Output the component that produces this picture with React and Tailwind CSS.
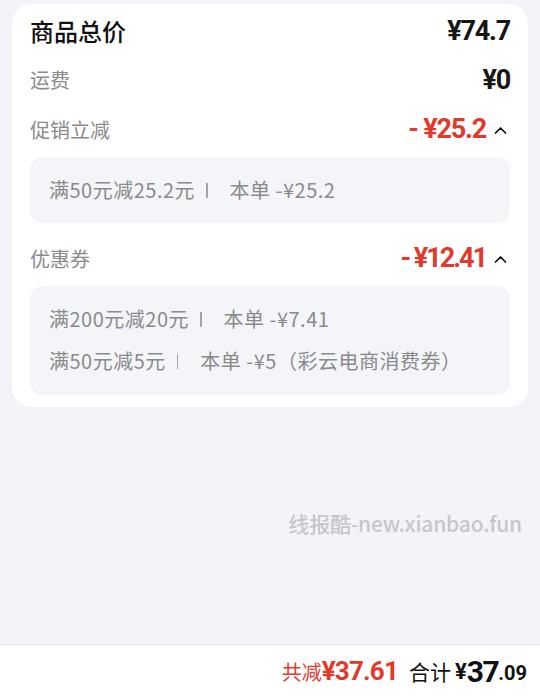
import React from 'react';

const font = { fontFamily: '"Noto Sans CJK SC", "Noto Sans", sans-serif' };
const num = { fontFamily: 'Roboto, "Noto Sans", sans-serif' };

const ChevronUp = () => (
  <svg width="13" height="8" viewBox="0 0 13 8" className="ml-[8px] mr-[3px]">
    <path d="M1.5 7 L6.5 2 L11.5 7" fill="none" stroke="#111" strokeWidth="1.7" strokeLinecap="round" strokeLinejoin="round" />
  </svg>
);

const Amount = ({ children, red, tight }) => (
  <span
    className={`text-[27px] font-bold leading-none ${tight ? 'tracking-[-2px]' : 'tracking-[-1.2px]'} ${red ? 'text-[#e13a2d]' : 'text-[#161616]'}`}
    style={num}
  >
    {children}
  </span>
);

// one line of the grey detail box: rule | amount
const DetailLine = ({ rule, amount }) => (
  <div className="h-[42px] flex items-center text-[20px] tracking-[0.5px] text-[#8a8a8a] whitespace-pre">
    <span>{rule}</span>
    <span className="ml-[11px] mr-[22px] h-[15px] w-[1.5px] bg-[#a5a5a5]" />
    <span>{amount}</span>
  </div>
);

const Detail = ({ children, last }) => (
  <div className={`rounded-[12px] bg-[#f4f5f8] px-[19px] pt-[12px] ${last ? 'pb-[13px]' : 'pb-[12px]'}`}>{children}</div>
);

export default function App() {
  return (
    <div className="h-[696px] flex flex-col bg-[#f3f4f7]" style={font}>
      <div className="flex-1 flex flex-col">
        <div className="mx-3 mt-1 rounded-[20px] bg-white px-[18px] pb-3">
          <div className="h-[54px] flex items-center justify-between">
            <span className="text-[24px] font-medium text-[#111]">商品总价</span>
            <Amount>¥74.7</Amount>
          </div>
          <div className="h-[44px] flex items-center justify-between">
            <span className="text-[20px] text-[#8a8a8a]">运费</span>
            <Amount>¥0</Amount>
          </div>
          <div className="h-[55px] flex items-center justify-between">
            <span className="text-[20px] text-[#8a8a8a]">促销立减</span>
            <div className="flex items-center">
              <Amount red>- ¥25.2</Amount>
              <ChevronUp />
            </div>
          </div>
          <Detail>
            <DetailLine rule="满50元减25.2元" amount="本单 -¥25.2" />
          </Detail>
          <div className="mt-[8px] h-[55px] flex items-center justify-between">
            <span className="text-[20px] text-[#8a8a8a]">优惠券</span>
            <div className="flex items-center">
              <Amount red tight>- ¥12.41</Amount>
              <ChevronUp />
            </div>
          </div>
          <Detail last>
            <DetailLine rule="满200元减20元" amount="本单 -¥7.41" />
            <DetailLine rule="满50元减5元" amount="本单 -¥5（彩云电商消费券）" />
          </Detail>
        </div>
        <div className="mt-[102px] pr-[18px] text-right text-[21px] font-medium leading-[28px] tracking-[-0.2px] text-[#c6c7cc]">
          线报酷-new.xianbao.fun
        </div>
      </div>
      <div className="h-[52px] border-t border-[#e6e7ea] bg-white flex items-center justify-end pr-[13px] pt-[2px]">
        <span className="text-[20px] text-[#e13a2d]">共减</span>
        <span className="text-[26px] font-bold tracking-[-0.8px] text-[#e13a2d]" style={num}>¥37.61</span>
        <span className="ml-[11px] text-[21px] text-[#111]">合计</span>
        <span className="ml-[4px] text-[22px] font-bold text-[#111]" style={num}>¥</span>
        <span className="text-[30px] font-bold tracking-[-1.5px] text-[#111] leading-none" style={num}>37</span>
        <span className="text-[20px] font-bold text-[#111] self-end mb-[13px] leading-none" style={num}>.09</span>
      </div>
    </div>
  );
}
